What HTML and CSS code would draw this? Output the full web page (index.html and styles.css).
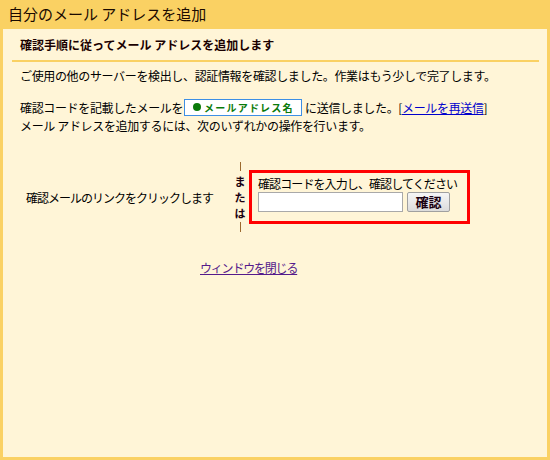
FILE: index.html
```html
<!DOCTYPE html>
<html lang="ja">
<head>
<meta charset="utf-8">
<title>自分のメール アドレスを追加</title>
<link rel="stylesheet" href="styles.css">
</head>
<body>
<div class="window">
  <header class="titlebar">自分のメール アドレスを追加</header>
  <main class="panel">
    <h2 class="subtitle">確認手順に従ってメール アドレスを追加します</h2>
    <div class="rule"></div>
    <p class="para">ご使用の他のサーバーを検出し、認証情報を確認しました。作業はもう少しで完了します。</p>
    <div class="para2">
      <div class="line1">確認コードを記載したメールを<span class="badge"><span class="dot"></span>メールアドレス名</span>に送信しました。[<a href="#" class="resend">メールを再送信</a>]</div>
      <div class="line2">メール アドレスを追加するには、次のいずれかの操作を行います。</div>
    </div>
    <div class="choices">
      <div class="choice-left">確認メールのリンクをクリックします</div>
      <div class="divider">
        <span class="vline top"></span>
        <span class="or">ま<br>た<br>は</span>
        <span class="vline bottom"></span>
      </div>
      <div class="codebox">
        <div class="codelabel">確認コードを入力し、確認してください</div>
        <div class="coderow">
          <input type="text" class="codeinput">
          <button class="confirm">確認</button>
        </div>
      </div>
    </div>
    <div class="closerow"><a href="#" class="close">ウィンドウを閉じる</a></div>
  </main>
</div>
</body>
</html>
```
FILE: styles.css
```css
* { box-sizing: border-box; }
html, body {
  margin: 0;
  padding: 0;
}
body {
  width: 550px;
  height: 460px;
  background: #fad163;
  font-family: "Noto Sans CJK JP", "Noto Sans", sans-serif;
  font-size: 12px;
  color: #000;
  overflow: hidden;
}
.window {
  display: flex;
  flex-direction: column;
  height: 460px;
}
.titlebar {
  height: 29px;
  padding: 3px 0 0 8px;
  font-size: 15px;
  line-height: 22px;
  color: #1a0a00;
}
.panel {
  margin: 0 3px 3px 3px;
  height: 428px;
  background: #fff5d7;
  padding: 0 8px 0 9px;
}
.subtitle {
  margin: 0;
  padding: 6px 0 0 8px;
  font-size: 12px;
  font-weight: bold;
  line-height: 20px;
  color: #1a0000;
}
.rule {
  margin-top: 5px;
  height: 2px;
  background: #fad163;
}
.para {
  margin: 6px 0 0 0;
  padding-left: 8px;
  line-height: 16px;
  letter-spacing: -0.35px;
}
.para2 {
  margin-top: 13px;
  padding-left: 8px;
  letter-spacing: -0.35px;
}
.line1 {
  display: flex;
  align-items: center;
  height: 20px;
  white-space: nowrap;
}
.line2 {
  line-height: 18px;
}
.badge {
  display: inline-flex;
  align-items: center;
  height: 17px;
  width: 118px;
  margin: 0 3px 0 1px;
  padding-left: 8px;
  background: #fff;
  border: 1px solid #3d8fe5;
  color: #0a7a0a;
  font-weight: bold;
  font-size: 10px;
  letter-spacing: 1.2px;
}
.dot {
  width: 8px;
  height: 8px;
  border-radius: 50%;
  background: #0a7a0a;
  margin-right: 3px;
}
.resend {
  color: #0000cc;
  text-decoration: underline;
}
.choices {
  display: flex;
  align-items: center;
  margin-top: 27px;
  height: 70px;
  padding-left: 14px;
}
.choice-left {
  width: 207px;
  flex: none;
  letter-spacing: -1px;
  white-space: nowrap;
}
.divider {
  width: 14px;
  flex: none;
  height: 70px;
  display: flex;
  flex-direction: column;
  align-items: center;
}
.vline {
  width: 1px;
  background: #9c6a2f;
}
.vline.top { height: 9px; margin-bottom: 2px; }
.vline.bottom { height: 10px; margin-top: 1px; }
.or {
  font-weight: bold;
  font-size: 11px;
  line-height: 16px;
  color: #1a0010;
  text-align: center;
}
.codebox {
  flex: none;
  margin-left: 2px;
  width: 221px;
  height: 54px;
  border: 3px solid #ff0000;
  padding: 3px 0 0 6px;
}
.codelabel {
  line-height: 16px;
  letter-spacing: -0.9px;
  white-space: nowrap;
}
.coderow {
  display: flex;
  gap: 4px;
}
.codeinput {
  width: 145px;
  height: 20px;
  margin: 0;
  border: 1px solid #a9a9a9;
  background: #fff;
  padding: 0 2px;
}
.confirm {
  width: 43px;
  height: 20px;
  margin: 0;
  padding: 0;
  border: 1px solid #a0a0a0;
  border-radius: 2px;
  background: linear-gradient(#f6f6f6, #dcdcdc);
  font-family: "Noto Sans CJK JP", sans-serif;
  font-size: 13px;
  font-weight: bold;
  line-height: 18px;
  color: #1a0010;
}
.closerow {
  margin-top: 28px;
  padding-left: 188px;
  line-height: 16px;
}
.close {
  color: #551a8b;
  text-decoration: underline;
  letter-spacing: -1.2px;
}
```
